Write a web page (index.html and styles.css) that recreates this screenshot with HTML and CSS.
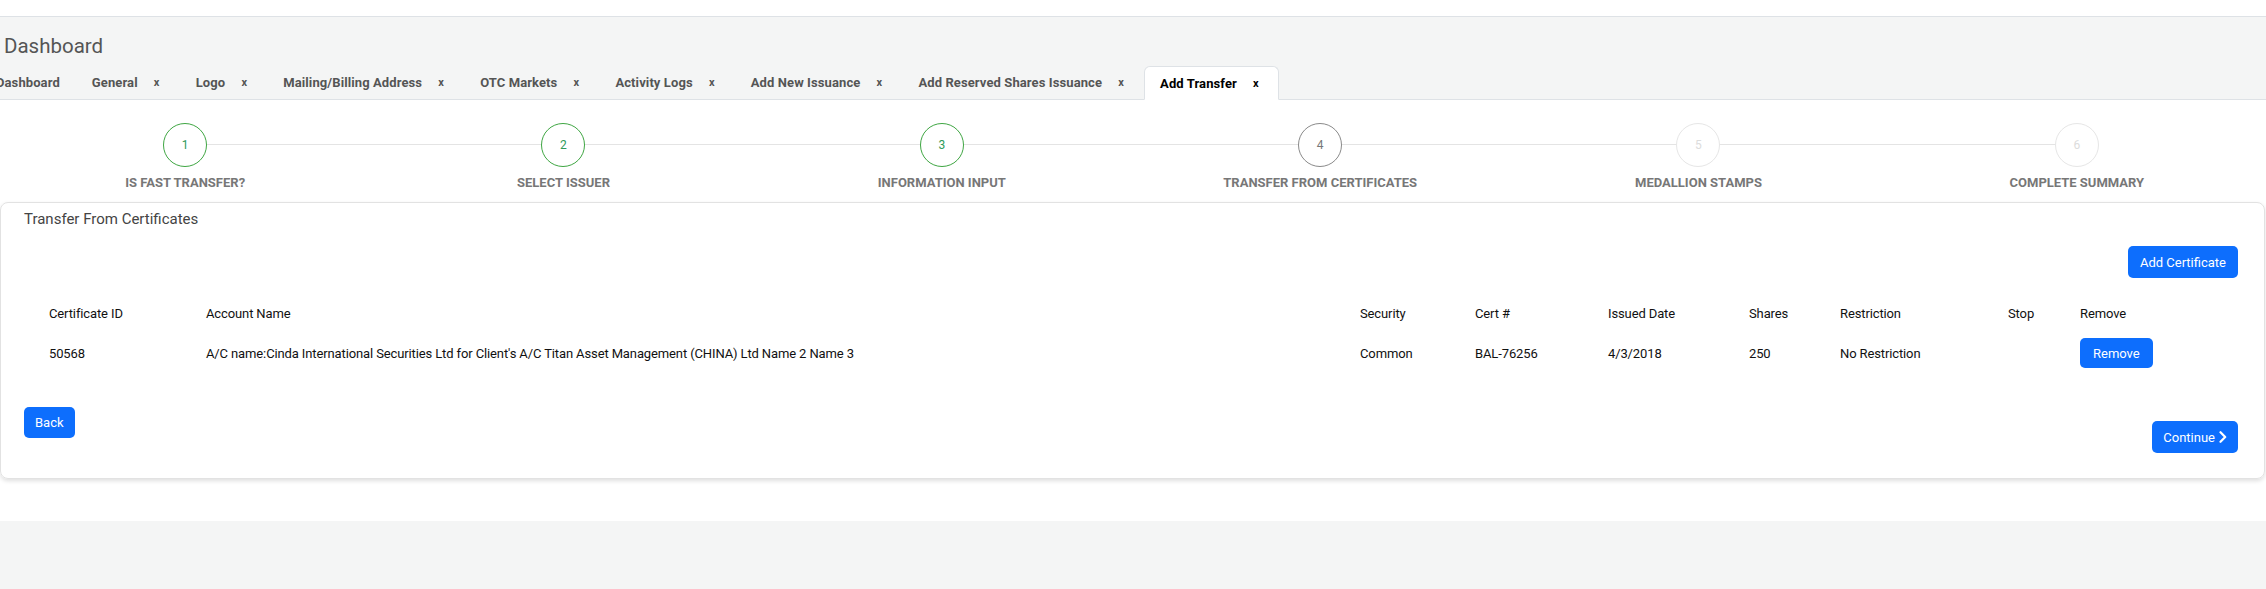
FILE: index.html
```html
<!DOCTYPE html>
<html lang="en">
<head>
<meta charset="utf-8">
<title>Dashboard - Add Transfer</title>
<link rel="stylesheet" href="styles.css">
</head>
<body>
<div class="top-strip"></div>
<header class="page-head">
  <h1 class="page-title">Dashboard</h1>
  <nav class="tabs">
    <div class="tab"><span>Dashboard</span></div>
    <div class="tab"><span>General</span><span class="close">x</span></div>
    <div class="tab"><span>Logo</span><span class="close">x</span></div>
    <div class="tab"><span>Mailing/Billing Address</span><span class="close">x</span></div>
    <div class="tab"><span>OTC Markets</span><span class="close">x</span></div>
    <div class="tab"><span>Activity Logs</span><span class="close">x</span></div>
    <div class="tab"><span>Add New Issuance</span><span class="close">x</span></div>
    <div class="tab"><span>Add Reserved Shares Issuance</span><span class="close">x</span></div>
    <div class="tab active"><span>Add Transfer</span><span class="close">x</span></div>
  </nav>
</header>
<main class="content">
  <ol class="steps">
    <li class="step done"><span class="circle">1</span><span class="label">Is Fast Transfer?</span></li>
    <li class="step done"><span class="circle">2</span><span class="label">Select Issuer</span></li>
    <li class="step done"><span class="circle">3</span><span class="label">Information Input</span></li>
    <li class="step current"><span class="circle">4</span><span class="label">Transfer From Certificates</span></li>
    <li class="step todo"><span class="circle">5</span><span class="label">Medallion Stamps</span></li>
    <li class="step todo"><span class="circle">6</span><span class="label">Complete Summary</span></li>
  </ol>
  <section class="card">
    <h2 class="card-title">Transfer From Certificates</h2>
    <div class="card-actions">
      <button class="btn btn-add" type="button">Add Certificate</button>
    </div>
    <div class="table">
      <div class="row head">
        <span>Certificate ID</span><span>Account Name</span><span>Security</span><span>Cert #</span><span>Issued Date</span><span>Shares</span><span>Restriction</span><span>Stop</span><span>Remove</span>
      </div>
      <div class="row">
        <span>50568</span><span>A/C name:Cinda International Securities Ltd for Client's A/C Titan Asset Management (CHINA) Ltd Name 2 Name 3</span><span>Common</span><span>BAL-76256</span><span>4/3/2018</span><span>250</span><span>No Restriction</span><span></span><span><button class="btn btn-remove" type="button">Remove</button></span>
      </div>
    </div>
    <div class="card-foot">
      <button class="btn btn-back" type="button">Back</button>
      <button class="btn btn-continue" type="button">Continue<svg class="chev" width="8" height="12" viewBox="0 0 8 12" aria-hidden="true"><path d="M1.5 1.2 L6.2 6 L1.5 10.8" fill="none" stroke="#fff" stroke-width="2.2" stroke-linecap="round" stroke-linejoin="round"/></svg></button>
    </div>
  </section>
</main>
<footer class="footer"></footer>
</body>
</html>
```

FILE: styles.css
```css
html, body {
  margin: 0;
  padding: 0;
}
body {
  width: 2266px;
  height: 589px;
  overflow: hidden;
  background: #fff;
  font-family: Roboto, "Liberation Sans", Arial, sans-serif;
  color: #212529;
}

.top-strip {
  height: 16px;
  border-bottom: 1px solid #dee2e6;
}

.page-head {
  background: #f4f5f5;
  padding-top: 17px;
  border-bottom: 1px solid #dee2e6;
}
.page-title {
  margin: 0 0 8px 4px;
  font-size: 20.5px;
  line-height: 24px;
  font-weight: 400;
  color: #555;
}
.tabs {
  display: flex;
  height: 33px;
  margin-left: -20px;
}
.tab {
  display: flex;
  align-items: center;
  padding: 0 16px;
  font-size: 13px;
  font-weight: 700;
  letter-spacing: 0.1px;
  color: #555;
  white-space: nowrap;
}
.tab.active {
  background: #fff;
  color: #000;
  border: 1px solid #dee2e6;
  border-bottom-color: #fff;
  border-radius: 6px 6px 0 0;
  padding: 0 15px;
  margin-bottom: -1px;
}
.close {
  width: 14px;
  margin-left: 12px;
  text-align: center;
  font-size: 11px;
  font-weight: 700;
}

.steps {
  list-style: none;
  display: grid;
  grid-template-columns: repeat(6, 1fr);
  margin: 0 0 11px -4px;
  padding: 23px 0 0;
}
.step {
  position: relative;
  display: flex;
  flex-direction: column;
  align-items: center;
}
.step::before,
.step::after {
  content: "";
  position: absolute;
  top: 21px;
  height: 1px;
  background: #e4e4e4;
}
.step::before { left: 0; right: 50%; }
.step::after { left: 50%; right: 0; }
.step:first-child::before,
.step:last-child::after { display: none; }
.circle {
  position: relative;
  z-index: 1;
  box-sizing: border-box;
  width: 44px;
  height: 44px;
  border: 1px solid #3fa643;
  border-radius: 50%;
  background: #fff;
  display: flex;
  align-items: center;
  justify-content: center;
  font-size: 12px;
  color: #2f9a5a;
}
.step.current .circle { border-color: #8a8a8a; color: #777; }
.step.todo .circle { border-color: #e6e6e6; color: #dcdcdc; }
.label {
  margin-top: 8px;
  font-size: 13px;
  line-height: 16px;
  font-weight: 700;
  color: #777;
  text-transform: uppercase;
}

.card {
  margin: 0 1px 42px 0;
  border: 1px solid #e2e2e2;
  border-radius: 8px;
  box-shadow: 0 2px 4px rgba(0, 0, 0, 0.13);
  padding: 6px 26px 25px 23px;
}
.card-title {
  margin: 0;
  font-size: 15px;
  line-height: 20px;
  font-weight: 400;
  color: #444;
}
.card-actions {
  display: flex;
  justify-content: flex-end;
  margin-top: 17px;
}
.table {
  margin-top: 15px;
}
.row {
  display: grid;
  grid-template-columns: 157px 1154px 115px 133px 141px 91px 168px 72px 1fr;
  align-items: center;
  height: 40px;
  padding-left: 25px;
  font-size: 13px;
  letter-spacing: -0.12px;
  color: #111;
}
.card-foot {
  display: flex;
  justify-content: space-between;
  align-items: flex-start;
  margin-top: 34px;
}

.btn {
  border: 0;
  border-radius: 5px;
  background: #0d6efd;
  color: #fff;
  font-family: inherit;
  font-size: 13px;
  cursor: pointer;
  display: inline-flex;
  align-items: center;
  justify-content: center;
}
.btn-add { height: 32px; padding: 0 12px; }
.btn-remove { height: 30px; padding: 0 13px; }
.btn-back { height: 31px; padding: 0 11px; }
.btn-continue { height: 32px; padding: 0 11px; margin-top: 14px; }
.chev { margin-left: 4px; }

.footer {
  height: 68px;
  background: #f4f5f5;
}
```
